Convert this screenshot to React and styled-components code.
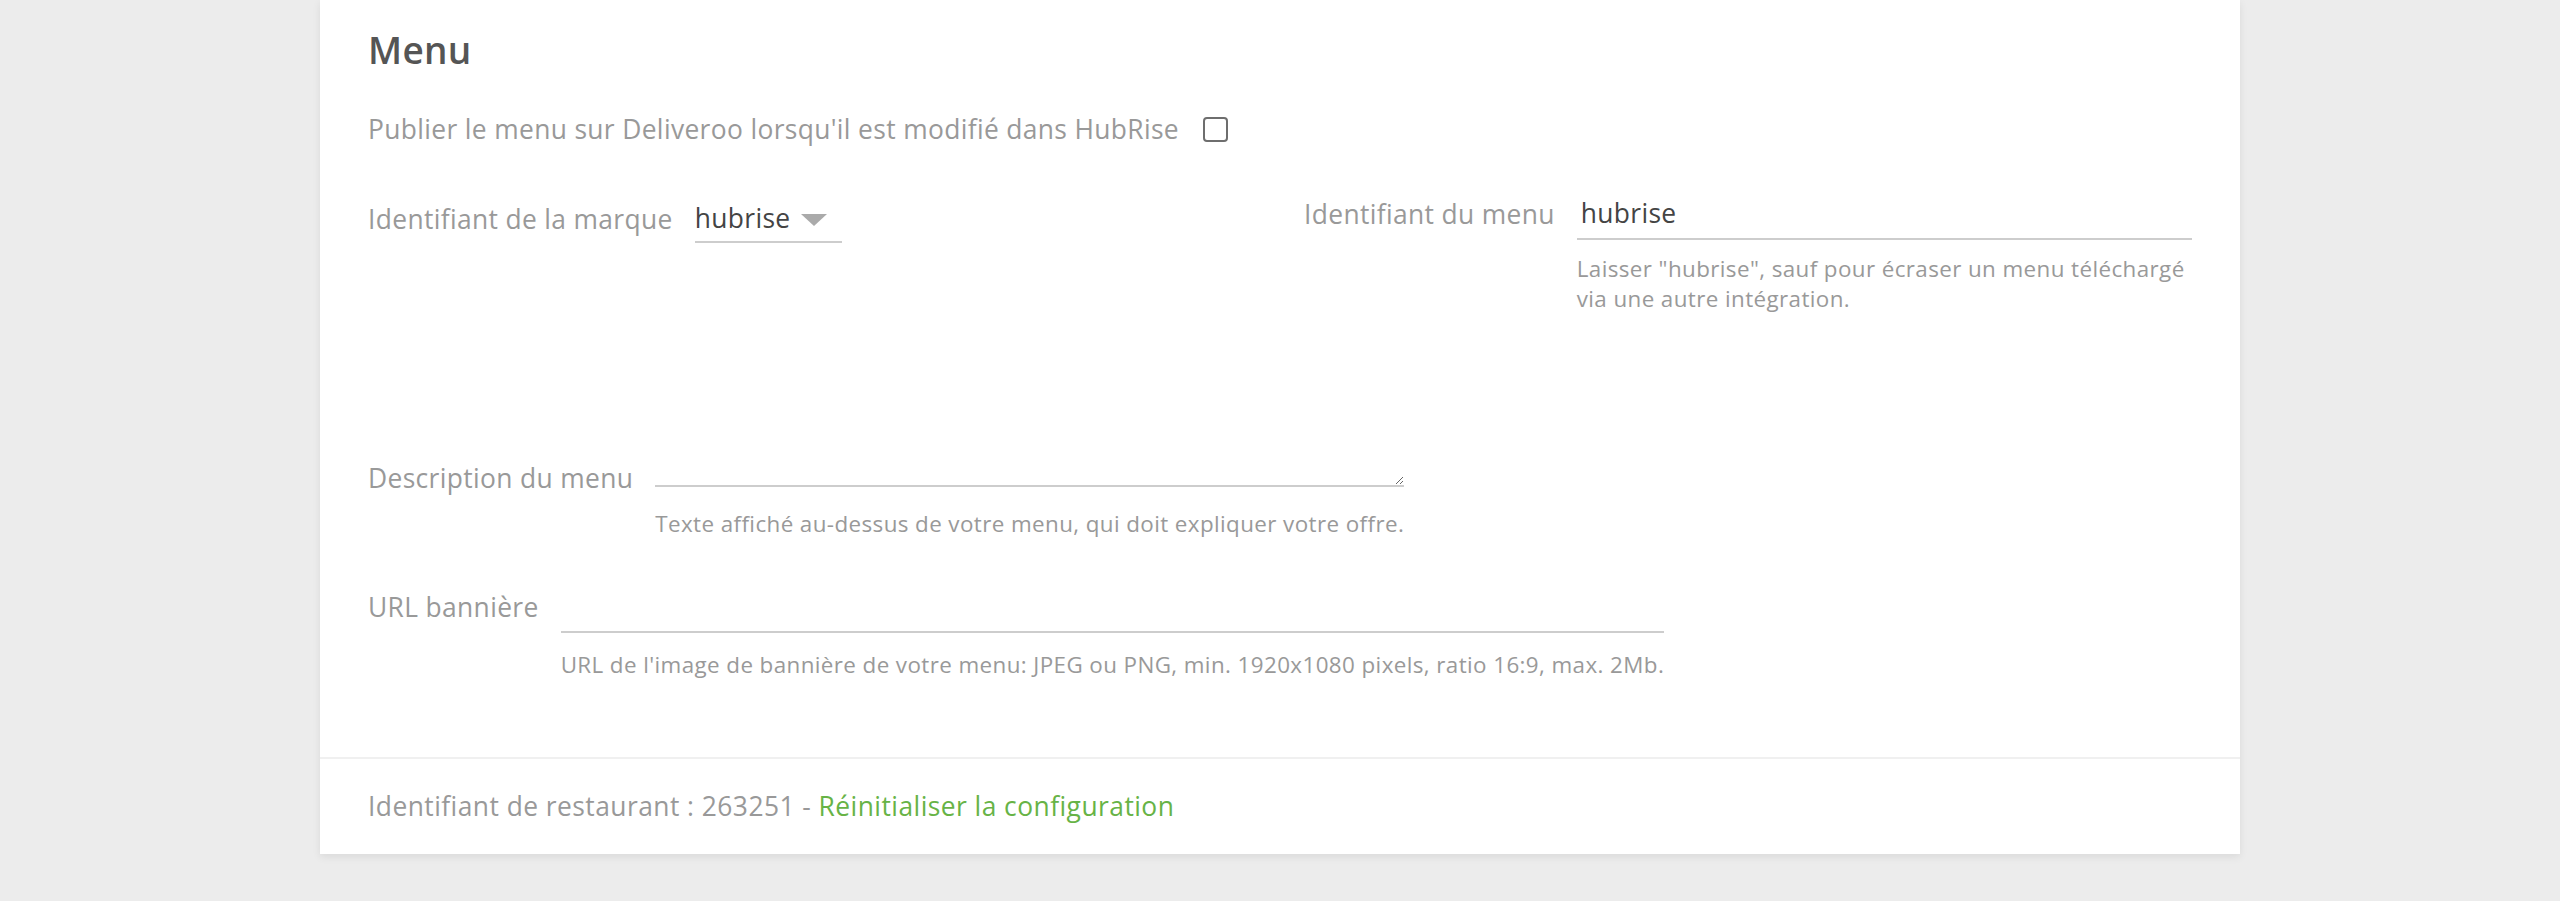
import React from 'react';
import styled, { createGlobalStyle } from 'styled-components';

const Global = createGlobalStyle`
  html, body { margin: 0; padding: 0; background: #ececec; }
  body { font-family: "Open Sans", "Noto Sans", sans-serif; }
  * { box-sizing: border-box; }
`;

const Page = styled.div`
  padding: 0 320px 47px;
`;

const Card = styled.section`
  background: #fff;
  box-shadow: 0 3px 8px rgba(0, 0, 0, 0.08);
`;

const Body = styled.div`
  padding: 28px 48px 77px;
  display: flex;
  flex-direction: column;
`;

const Title = styled.h2`
  margin: 0;
  font-size: 37px;
  line-height: 44px;
  letter-spacing: 0.3px;
  font-weight: 600;
  color: #555;
`;

const CheckRow = styled.label`
  margin-top: 37px;
  height: 40px;
  display: flex;
  align-items: center;
  gap: 24px;
  font-size: 26.4px;
  letter-spacing: 0.35px;
  color: #999;
`;

const Checkbox = styled.input`
  appearance: none;
  margin: 0;
  width: 25px;
  height: 25px;
  border: 2px solid #6e6e6e;
  border-radius: 4px;
  background: #fff;
`;

const Columns = styled.div`
  margin-top: 39px;
  display: grid;
  grid-template-columns: 1fr 1fr;
  column-gap: 48px;
  align-items: start;
`;

const Field = styled.div`
  display: flex;
  align-items: flex-start;
  margin-top: ${(p) => p.$mt || 0}px;
  padding-top: ${(p) => p.$pt || 0}px;
`;

const Label = styled.label`
  flex: none;
  margin-right: 22px;
  font-size: 26.4px;
  letter-spacing: 0.35px;
  line-height: ${(p) => p.$h}px;
  color: #999;
  white-space: nowrap;
`;

const Control = styled.div`
  flex: ${(p) => (p.$fill ? '1 1 auto' : '0 1 auto')};
  min-width: 0;
  display: flex;
  flex-direction: column;
  padding-top: ${(p) => p.$pt || 0}px;
`;

const TextInput = styled.input`
  width: 100%;
  height: 52px;
  padding: 0 0 0 4px;
  border: none;
  border-bottom: 2px solid #cdcdcd;
  background: transparent;
  font-family: inherit;
  font-size: 26.4px;
  letter-spacing: 0.35px;
  color: #444;
  outline: none;
`;

const TextArea = styled.textarea`
  display: block;
  width: 100%;
  height: 18px;
  padding: 0;
  border: none;
  border-bottom: 2px solid #cdcdcd;
  background: transparent;
  font-family: inherit;
  font-size: 26.4px;
  color: #444;
  outline: none;
`;

const SelectWrap = styled.div`
  position: relative;
  width: 147px;
  &::after {
    content: '';
    position: absolute;
    right: 15px;
    top: 19px;
    border-left: 13px solid transparent;
    border-right: 13px solid transparent;
    border-top: 12px solid #aaa;
    pointer-events: none;
  }
`;

const Select = styled.select`
  appearance: none;
  width: 100%;
  height: 48px;
  padding: 0;
  border: none;
  border-bottom: 2px solid #cdcdcd;
  border-radius: 0;
  background: transparent;
  font-family: inherit;
  font-size: 26.4px;
  letter-spacing: 0.35px;
  color: #444;
  outline: none;
`;

const Help = styled.div`
  margin-top: ${(p) => p.$mt}px;
  font-size: 22.4px;
  letter-spacing: 0.4px;
  line-height: 30px;
  color: #999;
`;

const Footer = styled.div`
  border-top: 2px solid #f0f0f0;
  padding: 31px 48px 32px;
  font-size: 26.4px;
  letter-spacing: 0.45px;
  line-height: 32px;
  color: #999;
`;

const Link = styled.a`
  color: #67b346;
  text-decoration: none;
`;

export default function App() {
  return (
    <>
      <Global />
      <Page>
        <Card>
          <Body>
            <Title>Menu</Title>
            <CheckRow>
              Publier le menu sur Deliveroo lorsqu'il est modifié dans HubRise
              <Checkbox type="checkbox" />
            </CheckRow>
            <Columns>
              <Field $pt={7}>
                <Label $h={48}>Identifiant de la marque</Label>
                <Control>
                  <SelectWrap>
                    <Select defaultValue="hubrise">
                      <option value="hubrise">hubrise</option>
                    </Select>
                  </SelectWrap>
                </Control>
              </Field>
              <Field>
                <Label $h={52}>Identifiant du menu</Label>
                <Control $fill>
                  <TextInput defaultValue="hubrise" />
                  <Help $mt={14}>
                    Laisser "hubrise", sauf pour écraser un menu téléchargé via une autre intégration.
                  </Help>
                </Control>
              </Field>
            </Columns>
            <Field $mt={149}>
              <Label $h={30}>Description du menu</Label>
              <Control $pt={6}>
                <TextArea />
                <Help $mt={22}>Texte affiché au-dessus de votre menu, qui doit expliquer votre offre.</Help>
              </Control>
            </Field>
            <Field $mt={42}>
              <Label $h={52}>URL bannière</Label>
              <Control>
                <TextInput />
                <Help $mt={17}>
                  URL de l'image de bannière de votre menu: JPEG ou PNG, min. 1920x1080 pixels, ratio 16:9, max. 2Mb.
                </Help>
              </Control>
            </Field>
          </Body>
          <Footer>
            Identifiant de restaurant : 263251 - <Link href="#">Réinitialiser la configuration</Link>
          </Footer>
        </Card>
      </Page>
    </>
  );
}
